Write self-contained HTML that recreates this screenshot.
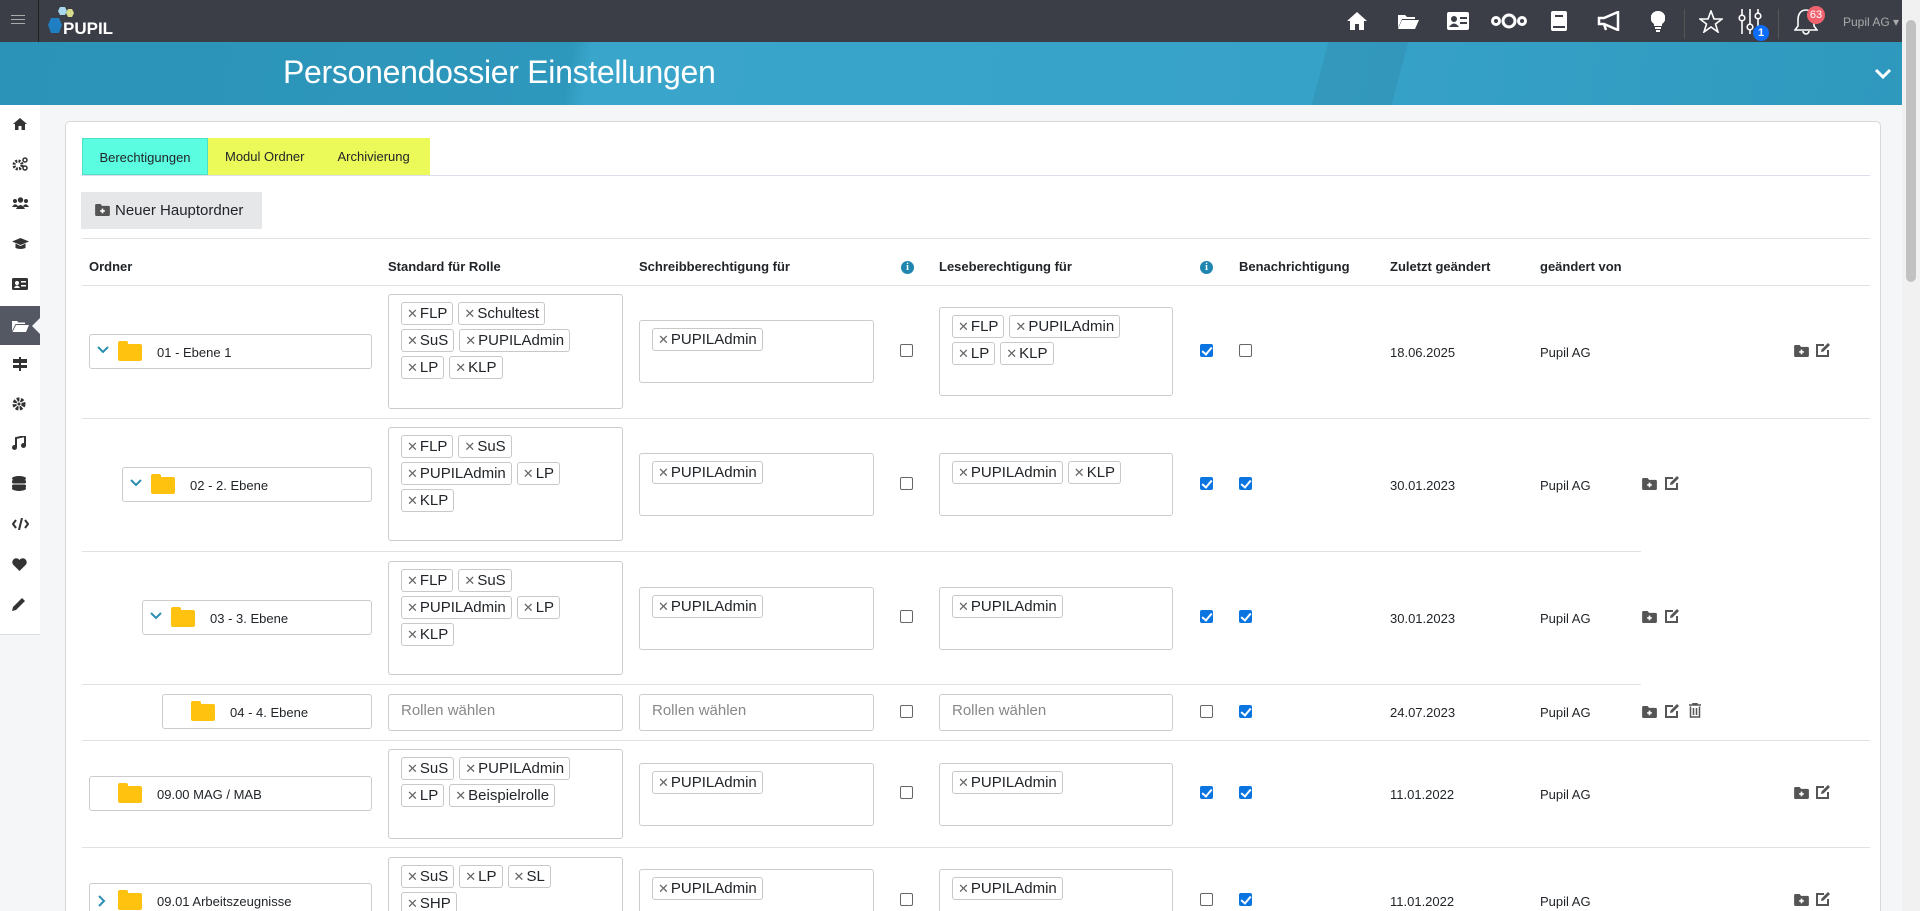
<!DOCTYPE html>
<html><head><meta charset="utf-8"><style>
*{box-sizing:border-box;margin:0;padding:0}
html,body{width:1920px;height:911px;overflow:hidden}
body{background:#f5f6f8;font-family:"Liberation Sans Narrow","Liberation Sans",sans-serif;color:#212529;position:relative}
.a{position:absolute}
#top{left:0;top:0;width:1902px;height:42px;background:#3b3e47}
#banner{left:0;top:42px;width:1902px;height:63px;background:linear-gradient(100deg,#2b93b7 0%,#2e97bc 30%,#3aa5ca 31%,#37a2c8 70%,#2f98bd 100%);overflow:hidden}
#side{left:0;top:105px;width:40px;height:530px;background:#fff;border-bottom:1px solid #ddd}
.si{position:absolute;left:12px}
#card{left:65px;top:121px;width:1816px;height:790px;background:#fff;border:1px solid #d8d8d8;border-bottom:none;border-radius:5px 5px 0 0}
.th{position:absolute;top:259px;font-size:13px;font-weight:bold}
.box{position:absolute;border:1px solid #ccc;border-radius:3px;background:#fff;padding:7px 23px 0 12px;display:flex;flex-wrap:wrap;align-content:flex-start}
.tag{height:23px;border:1px solid #c8c8c8;border-radius:3px;padding:0 5px;font-size:15px;line-height:21px;margin:0 5px 4px 0;white-space:nowrap}
.tag i{font-style:normal;color:#666;font-size:13px;margin-right:2px}
.ph{color:#888;font-size:15px;padding-top:7px}
.fold{position:absolute;border:1px solid #ccc;border-radius:3px;background:#fff;height:35px;font-size:13px}
.fi{position:absolute;top:9px;width:24px;height:17px;background:#ffc20e;border-radius:2px}
.fi:before{content:"";position:absolute;left:0;top:-3px;width:10px;height:5px;background:#ffc20e;border-radius:2px 2px 0 0}
.chev{position:absolute;left:7px;top:11px}
.cb{position:absolute;width:13px;height:13px;border:1px solid #666;border-radius:2px;background:#fff}
.cb.on{background:#0a75e0;border-color:#0a75e0}
.cb.on:after{content:"";position:absolute;left:3px;top:0px;width:4px;height:8px;border:solid #fff;border-width:0 2px 2px 0;transform:rotate(40deg)}
.tx{position:absolute;font-size:13px}
.hl{position:absolute;height:1px;background:#dee2e6;left:82px}
.info{position:absolute;width:13px;height:13px;border-radius:50%;background:#1f86b0;color:#fff;font-size:10px;font-weight:bold;text-align:center;line-height:13px;font-family:"Liberation Serif",serif}
</style></head><body>
<svg width="0" height="0" style="position:absolute"><defs>
<symbol id="fp" viewBox="0 0 16 13"><path d="M0 1.5 Q0 0 1.5 0 H6 L7.5 2 H14.5 Q16 2 16 3.5 V11.5 Q16 13 14.5 13 H1.5 Q0 13 0 11.5Z" fill="#555"/><path d="M8 5 V10 M5.5 7.5 H10.5" stroke="#fff" stroke-width="1.8"/></symbol>
<symbol id="ed" viewBox="0 0 16 16"><path d="M9 3 H2 V14 H13 V8" fill="none" stroke="#555" stroke-width="2"/><path d="M6 10 L6.5 7.5 L13 1 L15 3 L8.5 9.5Z" fill="#555"/></symbol>
<symbol id="dn" viewBox="0 0 12 8"><path d="M1 1 L6 6 L11 1" fill="none" stroke="#2b8fb3" stroke-width="2"/></symbol>
</defs></svg>
<div id="top" class="a">
 <div class="a" style="left:11px;top:15px;width:14px;height:1px;background:#aaa;box-shadow:0 4px 0 #aaa,0 8px 0 #aaa"></div>
 <div class="a" style="left:38px;top:0;width:1px;height:42px;background:#222"></div>
 <svg class="a" style="left:48px;top:3px" width="90" height="36" viewBox="0 0 90 36">
  <polygon points="12,4 17,4 19,8 17,12 12,12 10,8" fill="#a8d8ee"/>
  <polygon points="20,6 24,6 26,10 24,14 20,14 18,10" fill="#d6dc8a"/>
  <polygon points="3,15 11,15 14,22 11,30 3,30 0,22" fill="#1f7fc2"/>
  <text x="15" y="31" fill="#fff" font-family="Liberation Sans" font-weight="bold" font-size="17">PUPIL</text>
 </svg>
 <svg class="a" style="left:1346px;top:11px" width="22" height="20" viewBox="0 0 22 20"><path d="M11 1 L21 10 H18 V19 H13 V13 H9 V19 H4 V10 H1 Z" fill="#fff"/></svg>
 <svg class="a" style="left:1397px;top:13px" width="22" height="16" viewBox="0 0 22 16"><path d="M1 2 H8 L10 4 H18 V6 H5 L1 15 Z M5 7 H22 L18 16 H1 Z" fill="#fff"/></svg>
 <svg class="a" style="left:1447px;top:12px" width="22" height="18" viewBox="0 0 22 18"><rect x="0" y="0" width="22" height="18" rx="2" fill="#fff"/><circle cx="7" cy="7" r="3" fill="#3b3e47"/><path d="M2 15 Q7 8 12 15Z" fill="#3b3e47"/><rect x="13" y="5" width="7" height="2" fill="#3b3e47"/><rect x="13" y="10" width="7" height="2" fill="#3b3e47"/></svg>
 <svg class="a" style="left:1491px;top:12px" width="36" height="18" viewBox="0 0 36 18"><circle cx="5" cy="9" r="3.5" fill="none" stroke="#fff" stroke-width="3"/><circle cx="18" cy="9" r="6" fill="none" stroke="#fff" stroke-width="3"/><circle cx="31" cy="9" r="3.5" fill="none" stroke="#fff" stroke-width="3"/></svg>
 <svg class="a" style="left:1551px;top:11px" width="16" height="20" viewBox="0 0 16 20"><rect x="0" y="0" width="16" height="20" rx="2" fill="#fff"/><rect x="4" y="4" width="8" height="2" fill="#3b3e47"/><rect x="2" y="15" width="12" height="2" fill="#3b3e47"/></svg>
 <svg class="a" style="left:1597px;top:11px" width="24" height="20" viewBox="0 0 24 20"><path d="M2 7 H7 L21 1 V19 L7 13 H2 Z M7 13 L9 19" fill="none" stroke="#fff" stroke-width="2.5"/></svg>
 <svg class="a" style="left:1651px;top:11px" width="14" height="21" viewBox="0 0 14 21"><path d="M7 0 A7 7 0 0 1 11 13 V15 H3 V13 A7 7 0 0 1 7 0Z" fill="#fff"/><rect x="4" y="16" width="6" height="2" fill="#fff"/><rect x="5" y="19" width="4" height="2" fill="#fff"/></svg>
 <div class="a" style="left:1684px;top:9px;width:1px;height:30px;background:#555"></div>
 <svg class="a" style="left:1699px;top:10px" width="24" height="23" viewBox="0 0 24 23"><path d="M12 1 L15 9 L23 9 L16.5 14 L19 22 L12 17 L5 22 L7.5 14 L1 9 L9 9Z" fill="none" stroke="#fff" stroke-width="1.6"/></svg>
 <svg class="a" style="left:1738px;top:8px" width="24" height="26" viewBox="0 0 24 26"><g stroke="#fff" stroke-width="1.6" fill="none"><path d="M4 1 V26 M12 1 V26 M20 1 V26"/><circle cx="4" cy="10" r="2.8" fill="#3b3e47"/><circle cx="12" cy="19" r="2.8" fill="#3b3e47"/><circle cx="20" cy="8" r="2.8" fill="#3b3e47"/></g></svg>
 <div class="a" style="left:1753px;top:25px;width:16px;height:16px;border-radius:50%;background:#0d6efd;color:#fff;font-size:11px;text-align:center;line-height:16px;font-weight:bold">1</div>
 <div class="a" style="left:1778px;top:9px;width:1px;height:30px;background:#555"></div>
 <svg class="a" style="left:1794px;top:8px" width="24" height="27" viewBox="0 0 24 27"><path d="M12 2 C6 2 4 7 4 12 V18 L1 22 H23 L20 18 V12 C20 7 18 2 12 2Z M9 23 A3 3 0 0 0 15 23" fill="none" stroke="#fff" stroke-width="1.6"/></svg>
 <div class="a" style="left:1807px;top:6px;width:18px;height:18px;border-radius:50%;background:#f0626e;color:#fff;font-size:11px;text-align:center;line-height:18px">63</div>
 <div class="a" style="left:1843px;top:15px;color:#aaa;font-size:12px">Pupil AG ▾</div>
</div>
<div id="banner" class="a">
 <div class="a" style="left:1320px;top:0;width:80px;height:63px;background:rgba(0,0,0,0.06);transform:skewX(-15deg)"></div>
 <div class="a" style="left:283px;top:12px;color:#fff;font-size:32px;font-family:'Liberation Sans',sans-serif;font-weight:normal;letter-spacing:-0.3px">Personendossier Einstellungen</div>
 <svg class="a" style="left:1874px;top:26px" width="18" height="12" viewBox="0 0 18 12"><path d="M2 2 L9 9 L16 2" fill="none" stroke="#fff" stroke-width="3"/></svg>
</div>
<div class="a" style="left:1902px;top:0;width:18px;height:911px;background:#f1f1f1"></div>
<div class="a" style="left:1906px;top:20px;width:10px;height:262px;background:#c1c1c1;border-radius:5px"></div>
<div id="side" class="a">
 <div class="a" style="left:0;top:201px;width:40px;height:39px;background:#535862"></div>
 <div class="a" style="left:32px;top:212px;width:0;height:0;border-top:9px solid transparent;border-bottom:9px solid transparent;border-right:9px solid #f5f6f8"></div>
 <svg class="si" style="top:12px" width="16" height="14" viewBox="0 0 16 14"><path d="M8 1 L15 7 H13 V13 H9.5 V9 H6.5 V13 H3 V7 H1Z" fill="#333"/></svg>
 <svg class="si" style="top:52px" width="16" height="14" viewBox="0 0 16 14"><circle cx="6" cy="8" r="4" fill="none" stroke="#333" stroke-width="3" stroke-dasharray="2 1.2"/><circle cx="13" cy="3" r="2" fill="none" stroke="#333" stroke-width="1.5"/><circle cx="13" cy="11" r="2" fill="none" stroke="#333" stroke-width="1.5"/></svg>
 <svg class="si" style="top:92px" width="17" height="12" viewBox="0 0 17 12"><circle cx="8.5" cy="3" r="2.7" fill="#333"/><circle cx="3" cy="4" r="2" fill="#333"/><circle cx="14" cy="4" r="2" fill="#333"/><path d="M4 12 Q8.5 4 13 12Z M0 10 Q3 5 6 9 V10Z M17 10 Q14 5 11 9 V10Z" fill="#333"/></svg>
 <svg class="si" style="top:132px" width="17" height="13" viewBox="0 0 17 13"><path d="M8.5 1 L17 4.5 L8.5 8 L0 4.5Z M3.5 6.5 V11 Q8.5 13 13.5 11 V6.5 L8.5 9Z" fill="#333"/></svg>
 <svg class="si" style="top:173px" width="16" height="12" viewBox="0 0 16 12"><rect width="16" height="12" rx="1.5" fill="#333"/><circle cx="5" cy="5" r="2" fill="#fff"/><path d="M2 10 Q5 5 8 10Z" fill="#fff"/><rect x="9" y="3" width="5" height="1.5" fill="#fff"/><rect x="9" y="7" width="5" height="1.5" fill="#fff"/></svg>
 <svg class="si" style="top:215px" width="17" height="12" viewBox="0 0 17 12"><path d="M0 1 H5 L6.5 2.5 H13 V4 H3.5 L0 11Z M4 5 H17 L14 12 H0.5Z" fill="#fff"/></svg>
 <svg class="si" style="top:252px" width="16" height="14" viewBox="0 0 16 14"><rect x="7" y="0" width="2" height="14" fill="#333"/><rect x="1" y="2" width="14" height="4" fill="#333"/><rect x="1" y="8" width="14" height="3" fill="#333"/></svg>
 <svg class="si" style="top:292px" width="14" height="14" viewBox="0 0 14 14"><circle cx="7" cy="7" r="4.5" fill="none" stroke="#333" stroke-width="4" stroke-dasharray="2.5 1.3"/><circle cx="7" cy="7" r="1.5" fill="#333"/></svg>
 <svg class="si" style="top:331px" width="14" height="14" viewBox="0 0 14 14"><path d="M4 11 V2 L13 0 V9" fill="none" stroke="#333" stroke-width="2"/><circle cx="2.5" cy="11.5" r="2.5" fill="#333"/><circle cx="11.5" cy="9.5" r="2.5" fill="#333"/></svg>
 <svg class="si" style="top:371px" width="14" height="15" viewBox="0 0 14 15"><ellipse cx="7" cy="2.5" rx="7" ry="2.5" fill="#333"/><rect x="0" y="4" width="14" height="3.5" rx="1.5" fill="#333"/><rect x="0" y="8.5" width="14" height="3.5" rx="1.5" fill="#333"/><ellipse cx="7" cy="12.5" rx="7" ry="2.5" fill="#333"/></svg>
 <svg class="si" style="top:413px" width="17" height="12" viewBox="0 0 17 12"><path d="M4 2 L1 6 L4 10 M13 2 L16 6 L13 10 M10 0 L7 12" fill="none" stroke="#333" stroke-width="2"/></svg>
 <svg class="si" style="top:453px" width="15" height="13" viewBox="0 0 15 13"><path d="M7.5 13 L1 6.5 A3.5 3.5 0 0 1 7.5 2 A3.5 3.5 0 0 1 14 6.5Z" fill="#333"/></svg>
 <svg class="si" style="top:492px" width="14" height="14" viewBox="0 0 14 14"><path d="M0 14 L1 10 L10 1 L13 4 L4 13Z" fill="#333"/></svg>
</div>
<div id="card" class="a"></div>
<!-- tabs -->
<div class="a" style="left:82px;top:138px;width:126px;height:37px;background:#5bfde0;font-size:13px;text-align:center;line-height:37px;border:1px solid #4de0c6">Berechtigungen</div>
<div class="a" style="left:208px;top:138px;width:222px;height:37px;background:#ecfa59;font-size:13px;line-height:37px"><span style="margin-left:17px">Modul Ordner</span><span style="margin-left:33px">Archivierung</span></div>
<div class="hl" style="top:175px;width:1788px;background:#dde"></div>
<div class="a" style="left:81px;top:192px;width:181px;height:37px;background:#e6e7e9;font-size:15px;line-height:37px;padding-left:14px"><svg width="15" height="12" style="margin-right:5px;vertical-align:-1px"><use href="#fp"/></svg>Neuer Hauptordner</div>
<div class="hl" style="top:238px;width:1788px"></div>
<!-- headers -->
<div class="th" style="left:89px">Ordner</div>
<div class="th" style="left:388px">Standard für Rolle</div>
<div class="th" style="left:639px">Schreibberechtigung für</div>
<div class="info" style="left:901px;top:261px">i</div>
<div class="th" style="left:939px">Leseberechtigung für</div>
<div class="info" style="left:1200px;top:261px">i</div>
<div class="th" style="left:1239px">Benachrichtigung</div>
<div class="th" style="left:1390px">Zuletzt geändert</div>
<div class="th" style="left:1540px">geändert von</div>
<div class="hl" style="top:285px;width:1788px"></div>

<!-- row1 -->
<div class="fold" style="left:89px;top:334px;width:283px"><svg class="chev" width="12" height="8"><use href="#dn"/></svg><span class="fi" style="left:28px"></span><span class="a" style="left:67px;top:10px">01 - Ebene 1</span></div>
<div class="box" style="left:388px;top:294px;width:235px;height:115px"><span class="tag"><i>✕</i>FLP</span><span class="tag"><i>✕</i>Schultest</span><span class="tag"><i>✕</i>SuS</span><span class="tag"><i>✕</i>PUPILAdmin</span><span class="tag"><i>✕</i>LP</span><span class="tag"><i>✕</i>KLP</span></div>
<div class="box" style="left:639px;top:320px;width:235px;height:63px"><span class="tag"><i>✕</i>PUPILAdmin</span></div>
<div class="cb" style="left:900px;top:344px"></div>
<div class="box" style="left:939px;top:307px;width:234px;height:89px"><span class="tag"><i>✕</i>FLP</span><span class="tag"><i>✕</i>PUPILAdmin</span><span class="tag"><i>✕</i>LP</span><span class="tag"><i>✕</i>KLP</span></div>
<div class="cb on" style="left:1200px;top:344px"></div>
<div class="cb" style="left:1239px;top:344px"></div>
<div class="tx" style="left:1390px;top:345px">18.06.2025</div>
<div class="tx" style="left:1540px;top:345px">Pupil AG</div>
<svg class="a" style="left:1794px;top:345px" width="15" height="12"><use href="#fp"/></svg><svg class="a" style="left:1815px;top:342px" width="16" height="16"><use href="#ed"/></svg>
<div class="hl" style="top:418px;width:1788px"></div>

<!-- row2 -->
<div class="fold" style="left:122px;top:467px;width:250px"><svg class="chev" width="12" height="8"><use href="#dn"/></svg><span class="fi" style="left:28px"></span><span class="a" style="left:67px;top:10px">02 - 2. Ebene</span></div>
<div class="box" style="left:388px;top:427px;width:235px;height:114px"><span class="tag"><i>✕</i>FLP</span><span class="tag"><i>✕</i>SuS</span><span class="tag"><i>✕</i>PUPILAdmin</span><span class="tag"><i>✕</i>LP</span><span class="tag"><i>✕</i>KLP</span></div>
<div class="box" style="left:639px;top:453px;width:235px;height:63px"><span class="tag"><i>✕</i>PUPILAdmin</span></div>
<div class="cb" style="left:900px;top:477px"></div>
<div class="box" style="left:939px;top:453px;width:234px;height:63px"><span class="tag"><i>✕</i>PUPILAdmin</span><span class="tag"><i>✕</i>KLP</span></div>
<div class="cb on" style="left:1200px;top:477px"></div>
<div class="cb on" style="left:1239px;top:477px"></div>
<div class="tx" style="left:1390px;top:478px">30.01.2023</div>
<div class="tx" style="left:1540px;top:478px">Pupil AG</div>
<svg class="a" style="left:1642px;top:478px" width="15" height="12"><use href="#fp"/></svg><svg class="a" style="left:1664px;top:475px" width="16" height="16"><use href="#ed"/></svg>
<div class="hl" style="top:551px;width:1559px"></div>

<!-- row3 -->
<div class="fold" style="left:142px;top:600px;width:230px"><svg class="chev" width="12" height="8"><use href="#dn"/></svg><span class="fi" style="left:28px"></span><span class="a" style="left:67px;top:10px">03 - 3. Ebene</span></div>
<div class="box" style="left:388px;top:561px;width:235px;height:114px"><span class="tag"><i>✕</i>FLP</span><span class="tag"><i>✕</i>SuS</span><span class="tag"><i>✕</i>PUPILAdmin</span><span class="tag"><i>✕</i>LP</span><span class="tag"><i>✕</i>KLP</span></div>
<div class="box" style="left:639px;top:587px;width:235px;height:63px"><span class="tag"><i>✕</i>PUPILAdmin</span></div>
<div class="cb" style="left:900px;top:610px"></div>
<div class="box" style="left:939px;top:587px;width:234px;height:63px"><span class="tag"><i>✕</i>PUPILAdmin</span></div>
<div class="cb on" style="left:1200px;top:610px"></div>
<div class="cb on" style="left:1239px;top:610px"></div>
<div class="tx" style="left:1390px;top:611px">30.01.2023</div>
<div class="tx" style="left:1540px;top:611px">Pupil AG</div>
<svg class="a" style="left:1642px;top:611px" width="15" height="12"><use href="#fp"/></svg><svg class="a" style="left:1664px;top:608px" width="16" height="16"><use href="#ed"/></svg>
<div class="hl" style="top:684px;width:1559px"></div>

<!-- row4 -->
<div class="fold" style="left:162px;top:694px;width:210px"><span class="fi" style="left:28px"></span><span class="a" style="left:67px;top:10px">04 - 4. Ebene</span></div>
<div class="box ph" style="left:388px;top:694px;width:235px;height:37px">Rollen wählen</div>
<div class="box ph" style="left:639px;top:694px;width:235px;height:37px">Rollen wählen</div>
<div class="cb" style="left:900px;top:705px"></div>
<div class="box ph" style="left:939px;top:694px;width:234px;height:37px">Rollen wählen</div>
<div class="cb" style="left:1200px;top:705px"></div>
<div class="cb on" style="left:1239px;top:705px"></div>
<div class="tx" style="left:1390px;top:705px">24.07.2023</div>
<div class="tx" style="left:1540px;top:705px">Pupil AG</div>
<svg class="a" style="left:1642px;top:706px" width="15" height="12"><use href="#fp"/></svg><svg class="a" style="left:1664px;top:703px" width="16" height="16"><use href="#ed"/></svg>
<svg class="a" style="left:1689px;top:703px" width="12" height="15" viewBox="0 0 12 15"><path d="M0 2 H12 M4 2 V0.5 H8 V2 M1.5 3.5 V14 H10.5 V3.5 M4.5 5 V12 M7.5 5 V12" fill="none" stroke="#555" stroke-width="1.5"/></svg>
<div class="hl" style="top:740px;width:1788px"></div>

<!-- row5 -->
<div class="fold" style="left:89px;top:776px;width:283px"><span class="fi" style="left:28px"></span><span class="a" style="left:67px;top:10px">09.00 MAG / MAB</span></div>
<div class="box" style="left:388px;top:749px;width:235px;height:90px"><span class="tag"><i>✕</i>SuS</span><span class="tag"><i>✕</i>PUPILAdmin</span><span class="tag"><i>✕</i>LP</span><span class="tag"><i>✕</i>Beispielrolle</span></div>
<div class="box" style="left:639px;top:763px;width:235px;height:63px"><span class="tag"><i>✕</i>PUPILAdmin</span></div>
<div class="cb" style="left:900px;top:786px"></div>
<div class="box" style="left:939px;top:763px;width:234px;height:63px"><span class="tag"><i>✕</i>PUPILAdmin</span></div>
<div class="cb on" style="left:1200px;top:786px"></div>
<div class="cb on" style="left:1239px;top:786px"></div>
<div class="tx" style="left:1390px;top:787px">11.01.2022</div>
<div class="tx" style="left:1540px;top:787px">Pupil AG</div>
<svg class="a" style="left:1794px;top:787px" width="15" height="12"><use href="#fp"/></svg><svg class="a" style="left:1815px;top:784px" width="16" height="16"><use href="#ed"/></svg>
<div class="hl" style="top:847px;width:1788px"></div>

<!-- row6 -->
<div class="fold" style="left:89px;top:883px;width:283px"><svg class="a" style="left:8px;top:11px" width="8" height="12" viewBox="0 0 8 12"><path d="M1 1 L6 6 L1 11" fill="none" stroke="#2b8fb3" stroke-width="2"/></svg><span class="fi" style="left:28px"></span><span class="a" style="left:67px;top:10px">09.01 Arbeitszeugnisse</span></div>
<div class="box" style="left:388px;top:857px;width:235px;height:90px"><span class="tag"><i>✕</i>SuS</span><span class="tag"><i>✕</i>LP</span><span class="tag"><i>✕</i>SL</span><span class="tag"><i>✕</i>SHP</span></div>
<div class="box" style="left:639px;top:869px;width:235px;height:63px"><span class="tag"><i>✕</i>PUPILAdmin</span></div>
<div class="cb" style="left:900px;top:893px"></div>
<div class="box" style="left:939px;top:869px;width:234px;height:63px"><span class="tag"><i>✕</i>PUPILAdmin</span></div>
<div class="cb" style="left:1200px;top:893px"></div>
<div class="cb on" style="left:1239px;top:893px"></div>
<div class="tx" style="left:1390px;top:894px">11.01.2022</div>
<div class="tx" style="left:1540px;top:894px">Pupil AG</div>
<svg class="a" style="left:1794px;top:894px" width="15" height="12"><use href="#fp"/></svg><svg class="a" style="left:1815px;top:891px" width="16" height="16"><use href="#ed"/></svg>
</body></html>
